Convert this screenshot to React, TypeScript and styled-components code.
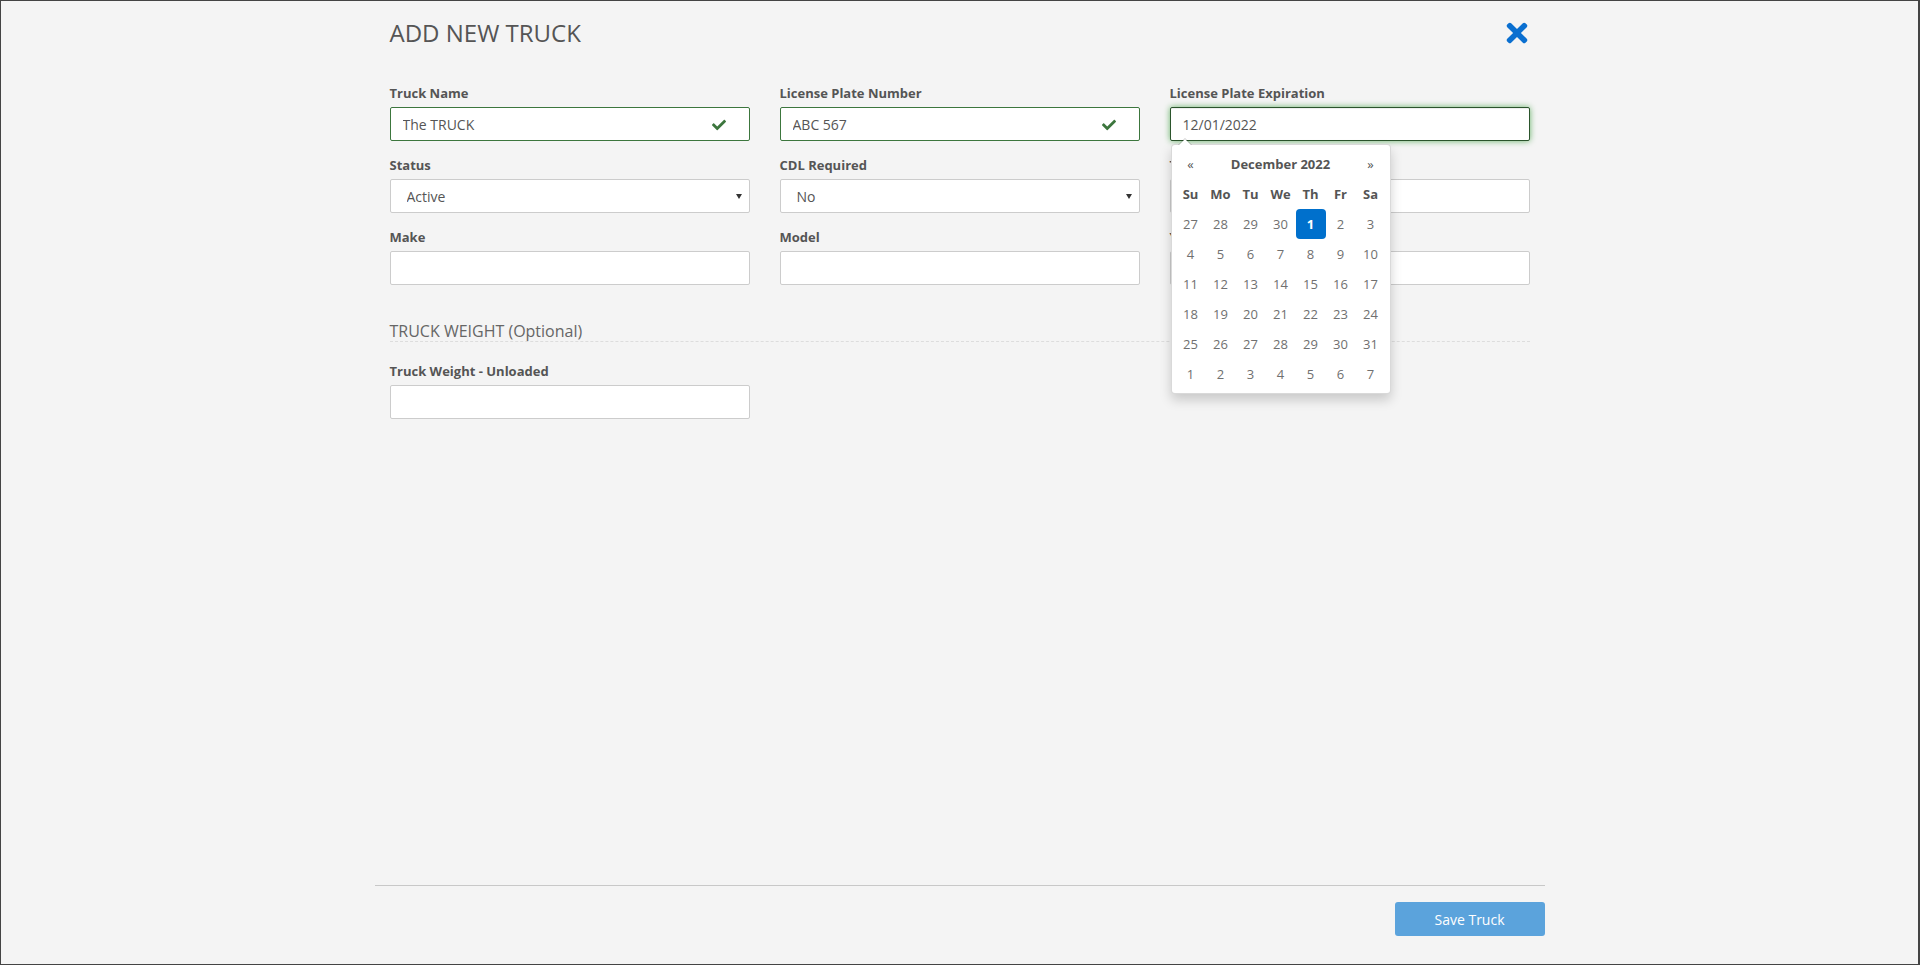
import styled, { createGlobalStyle } from "styled-components";
import { FaCheck, FaTimes } from "react-icons/fa";

const GlobalStyle = createGlobalStyle`
  html, body {
    margin: 0;
    padding: 0;
    background: #f4f4f4;
  }
  body {
    font-family: "Open Sans", "Liberation Sans", sans-serif;
    color: #555;
  }
  * {
    box-sizing: border-box;
  }
`;

const Page = styled.div`
  background: #f4f4f4;
  border: 1px solid #444;
  border-right-width: 2px;
  display: flex;
  flex-direction: column;
  height: 965px;
`;

const Modal = styled.div`
  display: flex;
  flex: 1;
  flex-direction: column;
  margin: 0 auto;
  width: 1170px;
`;

const Header = styled.div`
  align-items: center;
  display: flex;
  justify-content: space-between;
  padding: 15px 13px 0 15px;
`;

const Title = styled.h2`
  color: #555;
  font-size: 24px;
  font-weight: 400;
  line-height: 33px;
  margin: 0;
`;

const CloseButton = styled.button`
  background: none;
  border: 0;
  color: #0a6fd0;
  cursor: pointer;
  display: flex;
  padding: 0;
`;

const Body = styled.div`
  padding: 35px 15px 0;
`;

const Grid = styled.div`
  column-gap: 30px;
  display: grid;
  grid-template-columns: repeat(3, 360px);
`;

const Group = styled.div`
  margin-bottom: 15px;
`;

const Label = styled.label`
  color: #555;
  display: block;
  font-size: 13px;
  font-weight: 700;
  line-height: 18px;
  margin-bottom: 5px;
`;

const Field = styled.div`
  position: relative;
`;

const Input = styled.input<{ $state?: "valid" | "focus" }>`
  background: #fff;
  border: 1px solid
    ${(p) =>
      p.$state === "valid" ? "#3c763d" : p.$state === "focus" ? "#2b542c" : "#ccc"};
  border-radius: 2px;
  box-shadow: ${(p) =>
    p.$state === "focus"
      ? "inset 0 1px 1px rgba(0,0,0,.075), 0 0 6px #67b168"
      : "none"};
  color: #555;
  display: block;
  font-family: "Open Sans", "Liberation Sans", sans-serif;
  font-size: 14px;
  height: 34px;
  outline: none;
  padding: 0 12px;
  width: 100%;
`;

const Select = styled.select`
  appearance: none;
  background: #fff;
  border: 1px solid #ccc;
  border-radius: 2px;
  color: #555;
  display: block;
  font-family: "Open Sans", "Liberation Sans", sans-serif;
  font-size: 14px;
  height: 34px;
  outline: none;
  padding: 0 16px;
  width: 100%;
`;

const SelectArrow = styled.span`
  border-left: 3px solid transparent;
  border-right: 3px solid transparent;
  border-top: 5px solid #333;
  pointer-events: none;
  position: absolute;
  right: 8px;
  top: 15px;
`;

const CheckMark = styled.span`
  color: #3c763d;
  display: flex;
  position: absolute;
  right: 24px;
  top: 11px;
`;

const SectionTitle = styled.h3`
  border-bottom: 1px dashed #ddd;
  color: #666;
  font-size: 16px;
  font-weight: 400;
  line-height: 20px;
  margin: 21px 0 20px;
`;

const Footer = styled.div`
  border-top: 1px solid #c8c8c8;
  display: flex;
  justify-content: flex-end;
  margin-top: auto;
  padding: 16px 0 28px;
`;

const SaveButton = styled.button`
  background: #5ba3dc;
  border: 0;
  border-radius: 3px;
  color: #fff;
  cursor: pointer;
  font-family: "Open Sans", "Liberation Sans", sans-serif;
  font-size: 14px;
  height: 34px;
  width: 150px;
`;

const Picker = styled.div`
  background: #fff;
  border: 1px solid rgba(0, 0, 0, 0.15);
  border-radius: 4px;
  box-shadow: 0 6px 12px rgba(0, 0, 0, 0.175);
  left: 1px;
  padding: 4px;
  position: absolute;
  top: 37px;
  width: 220px;
  z-index: 10;

  &::before {
    border-bottom: 7px solid rgba(0, 0, 0, 0.2);
    border-left: 7px solid transparent;
    border-right: 7px solid transparent;
    content: "";
    left: 6px;
    position: absolute;
    top: -7px;
  }

  &::after {
    border-bottom: 6px solid #fff;
    border-left: 6px solid transparent;
    border-right: 6px solid transparent;
    content: "";
    left: 7px;
    position: absolute;
    top: -6px;
  }
`;

const Days = styled.div`
  display: grid;
  grid-auto-rows: 30px;
  grid-template-columns: repeat(7, 30px);
`;

const Cell = styled.div<{ $kind?: "nav" | "title" | "dow" | "active" | "day" }>`
  align-items: center;
  background: ${(p) => (p.$kind === "active" ? "#0070cc" : "transparent")};
  border-radius: 4px;
  color: ${(p) =>
    p.$kind === "active" ? "#fff" : p.$kind === "day" ? "#707070" : "#555"};
  display: flex;
  font-size: 13px;
  font-weight: ${(p) =>
    p.$kind === "title" || p.$kind === "dow" || p.$kind === "active" ? 700 : 400};
  grid-column: ${(p) => (p.$kind === "title" ? "span 5" : "auto")};
  justify-content: center;
`;

const weekDays = ["Su", "Mo", "Tu", "We", "Th", "Fr", "Sa"];

function buildDays() {
  const days: number[] = [27, 28, 29, 30];
  for (let d = 1; d <= 31; d++) days.push(d);
  for (let d = 1; d <= 7; d++) days.push(d);
  return days;
}

function DatePicker() {
  const days = buildDays();
  return (
    <Picker>
      <Days>
        <Cell $kind="nav">«</Cell>
        <Cell $kind="title">December 2022</Cell>
        <Cell $kind="nav">»</Cell>
        {weekDays.map((w) => (
          <Cell key={w} $kind="dow">
            {w}
          </Cell>
        ))}
        {days.map((d, i) => (
          <Cell key={i} $kind={i === 4 ? "active" : "day"}>
            {d}
          </Cell>
        ))}
      </Days>
    </Picker>
  );
}

export default function App() {
  return (
    <>
      <GlobalStyle />
      <Page>
        <Modal>
          <Header>
            <Title>ADD NEW TRUCK</Title>
            <CloseButton aria-label="Close">
              <FaTimes size={30} />
            </CloseButton>
          </Header>
          <Body>
            <Grid>
              <Group>
                <Label>Truck Name</Label>
                <Field>
                  <Input $state="valid" defaultValue="The TRUCK" />
                  <CheckMark>
                    <FaCheck size={14} />
                  </CheckMark>
                </Field>
              </Group>
              <Group>
                <Label>License Plate Number</Label>
                <Field>
                  <Input $state="valid" defaultValue="ABC 567" />
                  <CheckMark>
                    <FaCheck size={14} />
                  </CheckMark>
                </Field>
              </Group>
              <Group>
                <Label>License Plate Expiration</Label>
                <Field>
                  <Input $state="focus" defaultValue="12/01/2022" />
                  <DatePicker />
                </Field>
              </Group>

              <Group>
                <Label>Status</Label>
                <Field>
                  <Select defaultValue="Active">
                    <option>Active</option>
                    <option>Inactive</option>
                  </Select>
                  <SelectArrow />
                </Field>
              </Group>
              <Group>
                <Label>CDL Required</Label>
                <Field>
                  <Select defaultValue="No">
                    <option>No</option>
                    <option>Yes</option>
                  </Select>
                  <SelectArrow />
                </Field>
              </Group>
              <Group>
                <Label>Truck Type</Label>
                <Field>
                  <Input />
                </Field>
              </Group>

              <Group>
                <Label>Make</Label>
                <Field>
                  <Input />
                </Field>
              </Group>
              <Group>
                <Label>Model</Label>
                <Field>
                  <Input />
                </Field>
              </Group>
              <Group>
                <Label>Year</Label>
                <Field>
                  <Input />
                </Field>
              </Group>
            </Grid>

            <SectionTitle>TRUCK WEIGHT (Optional)</SectionTitle>

            <Grid>
              <Group>
                <Label>Truck Weight - Unloaded</Label>
                <Field>
                  <Input />
                </Field>
              </Group>
            </Grid>
          </Body>
          <Footer>
            <SaveButton>Save Truck</SaveButton>
          </Footer>
        </Modal>
      </Page>
    </>
  );
}
